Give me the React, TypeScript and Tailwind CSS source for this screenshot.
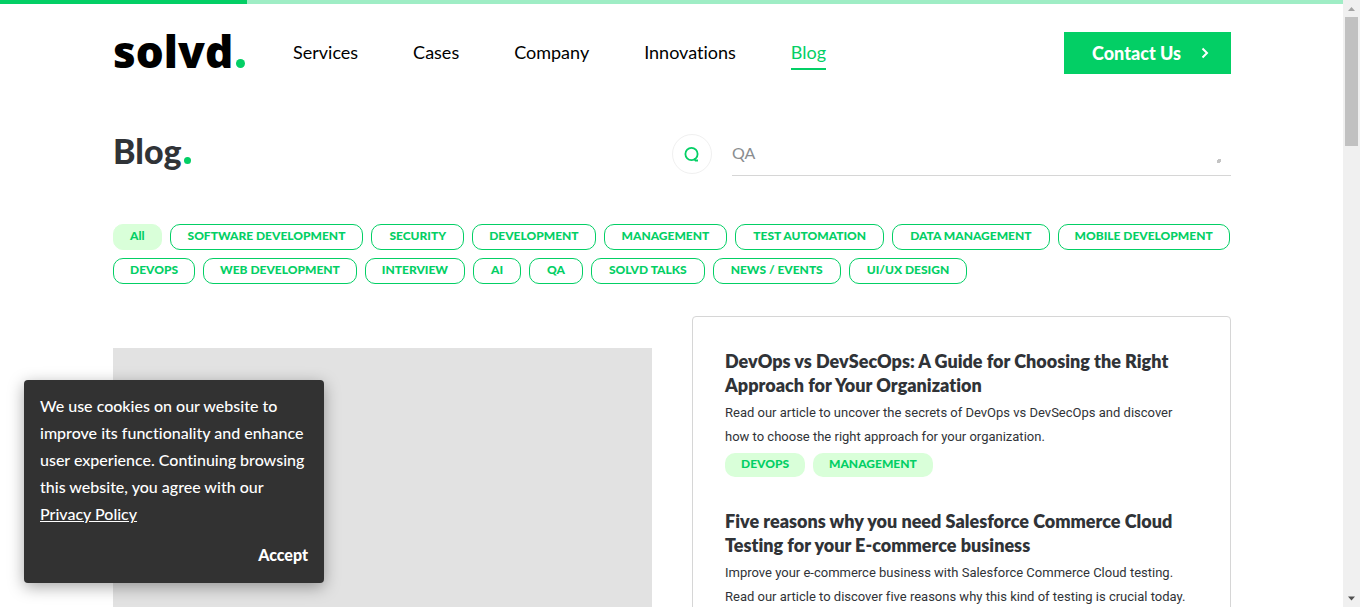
import React from "react";

const navItems = ["Services", "Cases", "Company", "Innovations", "Blog"];

const categories = [
  { name: "All", active: true },
  { name: "SOFTWARE DEVELOPMENT", roomy: true },
  { name: "SECURITY", roomy: true },
  { name: "DEVELOPMENT" },
  { name: "MANAGEMENT", roomy: true },
  { name: "TEST AUTOMATION", roomy: true },
  { name: "DATA MANAGEMENT", roomy: true },
  { name: "MOBILE DEVELOPMENT" },
  { name: "DEVOPS" },
  { name: "WEB DEVELOPMENT" },
  { name: "INTERVIEW" },
  { name: "AI", roomy: true },
  { name: "QA", roomy: true },
  { name: "SOLVD TALKS", roomy: true },
  { name: "NEWS / EVENTS", roomy: true },
  { name: "UI/UX DESIGN", roomy: true },
];

const articles = [
  {
    title: "DevOps vs DevSecOps: A Guide for Choosing the Right Approach for Your Organization",
    text: "Read our article to uncover the secrets of DevOps vs DevSecOps and discover how to choose the right approach for your organization.",
    tags: ["DEVOPS", "MANAGEMENT"],
  },
  {
    title: "Five reasons why you need Salesforce Commerce Cloud Testing for your E-commerce business",
    text: "Improve your e-commerce business with Salesforce Commerce Cloud testing. Read our article to discover five reasons why this kind of testing is crucial today.",
    tags: [],
  },
];

function Header() {
  return (
    <header className="flex h-[42px] items-center">
      <a href="#" aria-label="solvd home" className="flex w-[180px] items-baseline pb-1 font-['Open_Sans',sans-serif] text-[44px] leading-9 font-extrabold text-black">
        solvd
        <svg viewBox="0 0 10 10" className="ml-[3px] size-[9px]" aria-hidden="true">
          <circle cx="5" cy="5" r="5" fill="#03cf65" />
        </svg>
      </a>
      <nav className="flex flex-1 gap-[55px] text-[18px] leading-6 text-black">
        {navItems.map((item) => (
          <a
            key={item}
            href="#"
            className={item === "Blog" ? "border-b-2 border-[#03cf65] pt-1 pb-1 text-[#03cf65]" : "border-b-2 border-transparent pt-1 pb-1"}
          >
            {item}
          </a>
        ))}
      </nav>
      <a href="#" className="flex h-[42px] items-center gap-5 bg-[#03cf65] pr-5 pl-7 text-[18px] font-black text-white">
        Contact Us
        <svg viewBox="0 0 10 12" className="h-3 w-[10px]" fill="none" stroke="white" strokeWidth="2" aria-hidden="true">
          <path d="M1.500 1.500 6 6 1.500 10.500" />
        </svg>
      </a>
    </header>
  );
}

function Search() {
  return (
    <form className="flex w-1/2 items-start gap-5">
      <button type="button" aria-label="Search" className="flex size-10 items-center justify-center rounded-full border border-[#f0f0f0]">
        <svg viewBox="0 0 16 16" className="size-4" fill="none" stroke="#03cf65" strokeWidth="1.8" aria-hidden="true">
          <circle cx="7.5" cy="8" r="6.1" />
          <path d="M10 12.500 11.500 14.500H14" />
        </svg>
      </button>
      <label className="flex h-[42px] flex-1 items-center border-b border-[#d6d6d6] pr-[10px] pb-1">
        <span className="sr-only">Search articles</span>
        <input type="text" placeholder="QA" className="min-w-0 flex-1 text-[16px] leading-6 outline-none placeholder:text-[#8a8d90]" />
        <svg viewBox="0 0 4 4" className="mt-4 size-1" fill="#c4c4c4" aria-hidden="true">
          <path d="M1 0h3v3H3v1H0V1h1z" />
        </svg>
      </label>
    </form>
  );
}

function CookieNotice() {
  return (
    <aside className="absolute bottom-6 left-6 w-[300px] rounded bg-[#323232] px-4 pt-3 pb-4 text-[16px] text-white shadow-[0_4px_16px_rgba(0,0,0,0.35)]">
      <p className="leading-[27px] font-medium">
        We use cookies on our website to improve its functionality and enhance user experience. Continuing browsing this website, you agree with our{" "}
        <a href="#" className="inline-block underline">Privacy Policy</a>
      </p>
      <button type="button" className="mt-4 ml-auto block leading-6 font-black">Accept</button>
    </aside>
  );
}

function ScrollBar() {
  return (
    <div className="flex w-[17px] shrink-0 flex-col items-center bg-[#f0f0f0]" aria-hidden="true">
      <svg viewBox="0 0 17 17" className="size-[17px]"><path d="M5 11h7L8.500 7z" fill="#a3a3a3" /></svg>
      <div className="h-[129px] w-[13px] bg-[#c1c1c1]" />
      <svg viewBox="0 0 17 17" className="mt-auto size-[17px]"><path d="M5 6.500h7L8.500 10.500z" fill="#505050" /></svg>
    </div>
  );
}

function pillClass(active?: boolean, roomy?: boolean) {
  if (active) {
    return "h-[26px] rounded-[10px] border border-[#d9ffd9] bg-[#d9ffd9] px-4 pb-0.5 text-[12px] leading-4 font-black text-[#03cf65]";
  }
  return roomy
    ? "h-[26px] rounded-[10px] border border-[#03cf65] px-[17px] pb-0.5 text-[12px] leading-4 font-black text-[#03cf65]"
    : "h-[26px] rounded-[10px] border border-[#03cf65] px-4 pb-0.5 text-[12px] leading-4 font-black text-[#03cf65]";
}

export default function App() {
  return (
    <div className="relative flex h-screen overflow-hidden bg-white font-['Lato','Liberation_Sans',sans-serif] text-[#303337] [font-variant-ligatures:none]">
      <div className="min-w-0 flex-1">
        <div className="h-1 bg-[#9fedc5]">
          <div className="h-1 w-[247px] bg-[#03cf65]" />
        </div>
        <div className="mx-auto w-full px-28 pt-7">
          <div className="pl-px">
            <Header />
            <div className="mt-[60px] flex justify-between">
              <h1 className="flex items-baseline text-[34px] leading-[34px] font-black">
                Blog
                <svg viewBox="0 0 10 10" className="ml-[3px] size-[7px]" aria-hidden="true">
                  <circle cx="5" cy="5" r="5" fill="#03cf65" />
                </svg>
              </h1>
              <Search />
            </div>
            <div className="mt-12 flex flex-wrap gap-2">
              {categories.map(({ name, active, roomy }) => (
                <button key={name} type="button" className={pillClass(active, roomy)}>
                  {name}
                </button>
              ))}
            </div>
            <main className="mt-8 grid grid-cols-2 gap-10">
              <div className="mt-8 bg-[#e2e2e2]" />
              <section className="flex flex-col gap-8 rounded border border-[#d6d6d6] p-8 pr-10">
                {articles.map((article) => (
                  <article key={article.title} className="flex flex-col gap-1">
                    <h2 className="text-[18px] leading-6 font-extrabold">{article.title}</h2>
                    <p className="font-['Roboto',sans-serif] text-[13px] leading-6">{article.text}</p>
                    <div className="flex gap-2">
                      {article.tags.map((tag) => (
                        <a key={tag} href="#" className="h-6 rounded-[10px] bg-[#d9ffd9] px-4 text-[12px] leading-[22px] font-black text-[#03cf65]">
                          {tag}
                        </a>
                      ))}
                    </div>
                  </article>
                ))}
              </section>
            </main>
          </div>
        </div>
      </div>
      <ScrollBar />
      <CookieNotice />
    </div>
  );
}
